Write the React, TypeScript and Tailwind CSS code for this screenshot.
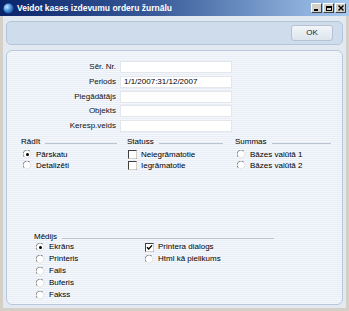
import React from "react";

const font = { fontFamily: '"Liberation Sans", Arial, sans-serif' };

function Radio({ checked = false }: { checked?: boolean }) {
  return (
    <svg width={9} height={9} viewBox="0 0 9 9" className="shrink-0">
      <circle cx={4.5} cy={4.5} r={4} fill="#ffffff" />
      <path d="M1.2 7 A4 4 0 0 1 7 1.2" fill="none" stroke="#8a8a8a" strokeWidth={1} />
      <path d="M7.6 2.2 A4 4 0 0 1 2.2 7.6" fill="none" stroke="#dcdcdc" strokeWidth={1} />
      {checked && <circle cx={4.5} cy={4.5} r={1.5} fill="#000000" />}
    </svg>
  );
}

function Check({ checked = false }: { checked?: boolean }) {
  return (
    <svg width={9} height={9} viewBox="0 0 9 9" className="shrink-0">
      <rect x={0.5} y={0.5} width={8} height={8} fill="#ffffff" stroke="#404040" strokeWidth={1} />
      <path d="M0.5 8.5 H8.5 V0.5" fill="none" stroke="#d4d0c8" strokeWidth={1} />
      {checked && <path d="M2 4.2 L3.7 6 L7 2.4" fill="none" stroke="#000" strokeWidth={1.4} />}
    </svg>
  );
}

function Option({
  label,
  kind,
  checked,
  tall,
}: {
  label: string;
  kind: "radio" | "check";
  checked?: boolean;
  tall?: boolean;
}) {
  return (
    <div className={`flex items-center gap-[4px] ${tall ? "h-[12px]" : "h-[11px]"}`}>
      {kind === "radio" ? <Radio checked={checked} /> : <Check checked={checked} />}
      <span className="leading-none">{label}</span>
    </div>
  );
}

function GroupHead({ label }: { label: string }) {
  return (
    <div className="flex items-center gap-[5px] h-[11px]">
      <span className="leading-none">{label}</span>
      <div className="flex-1 h-px bg-[#b9c3d1] mt-[3px]" />
    </div>
  );
}

const fields = [
  { label: "Sēr. Nr.", value: "" },
  { label: "Periods", value: "1/1/2007:31/12/2007" },
  { label: "Piegādātājs", value: "" },
  { label: "Objekts", value: "" },
  { label: "Keresp.veids", value: "" },
];

export default function App() {
  return (
    <div style={font} className="w-[349px] h-[311px] bg-[#d4d0c8] flex flex-col text-[8px] text-black overflow-hidden">
      {/* title bar */}
      <div className="h-[16px] flex items-center bg-[linear-gradient(90deg,#0a246a,#3a5c9a_45%,#a6caf0)] pl-[3px] pr-[3px]">
        <svg width={11} height={11} viewBox="0 0 11 11" className="shrink-0">
          <defs>
            <radialGradient id="g" cx="35%" cy="35%" r="70%">
              <stop offset="0%" stopColor="#cfe8ff" />
              <stop offset="60%" stopColor="#3a8ad8" />
              <stop offset="100%" stopColor="#1a4a90" />
            </radialGradient>
          </defs>
          <circle cx={5.5} cy={5.5} r={5} fill="url(#g)" />
        </svg>
        <span className="ml-[3px] text-white font-bold text-[8.5px] leading-none flex-1">
          Veidot kases izdevumu orderu žurnālu
        </span>
        <div className="flex gap-0">
          {["min", "max", "close"].map((k) => (
            <div
              key={k}
              className="w-[11px] h-[10px] bg-[#d4d0c8] border border-t-white border-l-white border-r-[#404040] border-b-[#404040] flex items-center justify-center ml-px"
            >
              {k === "min" && <div className="w-[4px] h-[1.5px] bg-black mt-[4px] -ml-[1px]" />}
              {k === "max" && <div className="w-[6px] h-[5px] border border-black border-t-2" />}
              {k === "close" && (
                <svg width={6} height={6} viewBox="0 0 6 6">
                  <path d="M0.5 0.5 L5.5 5.5 M5.5 0.5 L0.5 5.5" stroke="#000" strokeWidth={1.4} />
                </svg>
              )}
            </div>
          ))}
        </div>
      </div>

      {/* client area */}
      <div className="flex-1 mx-[3px] mb-[3px] bg-[#e3e9f1] flex flex-col px-[3px] pt-[5px] pb-[3px] gap-[5px]">
        <div className="h-[24px] rounded-[5px] border border-[#b3c5db] bg-[#cfdcec] flex items-center justify-end pr-[9px]">
          <div className="w-[42px] h-[16px] rounded-[3px] border border-[#b5c3d4] bg-[linear-gradient(#f2f5f9,#dde5ef)] flex items-center justify-center text-[8px] text-[#222]">
            OK
          </div>
        </div>

        <div className="flex-1 rounded-[6px] border border-[#b8c8dc] bg-[repeating-linear-gradient(#f4f7fb_0px,#f4f7fb_1px,#e9eef6_1px,#e9eef6_2px)] flex flex-col pt-[10px]">
          {/* fields */}
          <div className="flex flex-col gap-[2.75px]">
            {fields.map((f) => (
              <div key={f.label} className="flex items-center h-[12px]">
                <div className="w-[113px] text-right pr-[4px] text-[#111]">{f.label}</div>
                <div className="w-[112px] h-[12px] bg-white border border-[#e3e7ec] flex items-center pl-[3px]">
                  {f.value}
                </div>
              </div>
            ))}
          </div>

          {/* groups */}
          <div className="flex mt-[4px] pl-[14px] gap-[10px] h-[35px]">
            <div className="w-[96px] flex flex-col">
              <GroupHead label="Rādīt" />
              <div className="flex flex-col pl-[2px] mt-[2px]">
                <Option kind="radio" checked label="Pārskatu" />
                <Option kind="radio" label="Detalizēti" />
              </div>
            </div>
            <div className="w-[96px] flex flex-col">
              <GroupHead label="Statuss" />
              <div className="flex flex-col pl-[1px] mt-[2px]">
                <Option kind="check" label="Neiegrāmatotie" />
                <Option kind="check" label="Iegrāmatotie" />
              </div>
            </div>
            <div className="w-[96px] flex flex-col ml-[2px]">
              <GroupHead label="Summas" />
              <div className="flex flex-col pl-[2px] mt-[2px]">
                <Option kind="radio" label="Bāzes valūtā 1" />
                <Option kind="radio" label="Bāzes valūtā 2" />
              </div>
            </div>
          </div>

          {/* media */}
          <div className="flex flex-col mt-[60px] pl-[27px] w-[267px]">
            <GroupHead label="Mēdijs" />
            <div className="flex pl-[2px] -mt-[1px]">
              <div className="w-[109px] flex flex-col">
                <Option kind="radio" tall checked label="Ekrāns" />
                <Option kind="radio" tall label="Printeris" />
                <Option kind="radio" tall label="Fails" />
                <Option kind="radio" tall label="Buferis" />
                <Option kind="radio" tall label="Fakss" />
              </div>
              <div className="flex flex-col">
                <Option kind="check" tall checked label="Printera dialogs" />
                <Option kind="radio" tall label="Html kā pielikums" />
              </div>
            </div>
          </div>
        </div>
      </div>
    </div>
  );
}
